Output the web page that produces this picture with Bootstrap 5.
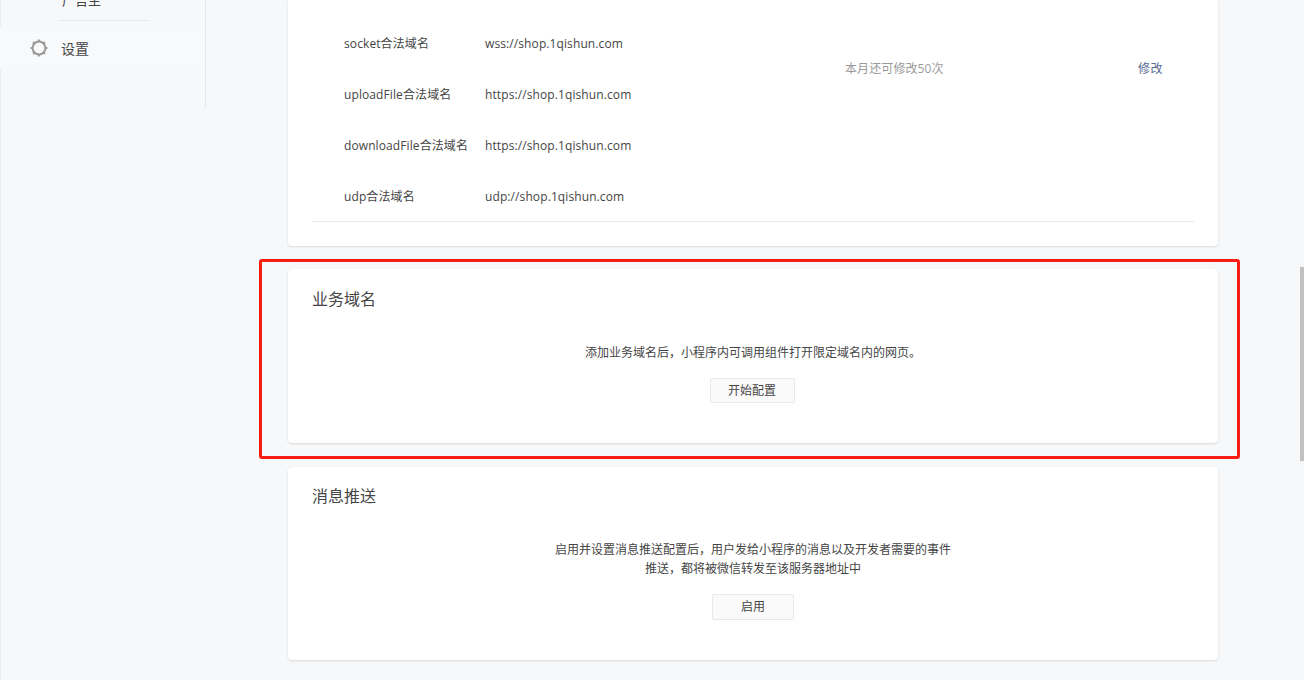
<!DOCTYPE html>
<html lang="zh">
<head>
<meta charset="utf-8">
<title>开发设置</title>
<link rel="stylesheet" href="https://cdn.jsdelivr.net/npm/bootstrap@5.3.0/dist/css/bootstrap.min.css">
<style>
html,body{height:680px;overflow:hidden}
body{background:#f6f8f9;font-family:"Open Sans","Noto Sans CJK SC",sans-serif;font-size:12px;color:#454545;position:relative}
.page-shell{height:680px;border-left:1px solid #eceef0}
.side-col{width:205px;height:108px;border-right:1px solid #e7e8ea;flex:none}
.side-cut{height:21px;position:relative;overflow:hidden;margin-left:59px;width:89px;border-bottom:1px solid #e7e8ea}
.side-cut span{display:block;margin-top:-12px;padding-left:2px;font-size:13px;line-height:24px}
.side-item{height:42px;margin:6px 0 0 -1px;padding-left:30px;gap:13px;font-size:14px;background:#f7f9fa}
.main-col{width:930px;margin-left:82px;flex:none}
.panel-box{background:#fff;border-radius:4px;box-shadow:0 1px 2px rgba(150,150,150,.3);padding:0 24px}
.panel-a{height:246px;border-radius:0 0 4px 4px;padding-top:34px}
.panel-b{height:174px;margin-top:23px;padding-top:19px}
.panel-c{height:193px;margin-top:24px;padding-top:18px}
.panel-title{font-size:16px;line-height:22px;margin:0;font-weight:400}
.dom-row{height:51px;padding-left:32px;line-height:19px;letter-spacing:.1px}
.dom-list{border-bottom:1px solid #e7e8ea;height:188px;position:relative}
.dom-name{width:141px}
.dom-val{width:360px}
.dom-note{position:absolute;left:533px;top:25px;line-height:19px;color:#9a9a9a;letter-spacing:.1px}
.dom-link{position:absolute;left:826px;top:25px;line-height:19px;color:#576b95;text-decoration:none;letter-spacing:.5px}
.panel-text{text-align:center;line-height:19px;font-size:12px}
.panel-b .panel-text{margin-top:33px;margin-bottom:16px}
.panel-c .panel-text{margin:33px auto 16px;width:400px}
.plain-btn{background:#fafafa;border:1px solid #e7e8ea;border-radius:2px;font-size:12px;line-height:22px;color:#454545;padding:0;display:block;margin:0 auto}
.btn-b{width:85px;height:25px;transform:translateX(-1px)}
.btn-c{width:82px;height:26px}
.red-frame{position:absolute;left:259px;top:259px;width:981px;height:200px;border:3px solid #fb1d14;border-radius:3px;pointer-events:none}
.scroll-thumb{position:absolute;right:0;top:267px;width:4px;height:194px;background:#c1c1c1}
</style>
</head>
<body>
<div class="page-shell d-flex">
  <nav class="side-col">
    <div class="side-cut"><span>广告主</span></div>
    <div class="side-item d-flex align-items-center">
      <svg width="18" height="18" viewBox="0 0 18 18" fill="none" stroke="#9a9a9a" aria-hidden="true">
        <circle cx="9" cy="9" r="6.4" stroke-width="2"/>
        <path d="M9 .6v2M9 15.4v2M.6 9h2M15.4 9h2M3.1 3.1l1.4 1.4M13.5 13.5l1.4 1.4M3.1 14.9l1.4-1.4M13.5 4.5l1.4-1.4" stroke-width="2.2"/>
      </svg>
      <span>设置</span>
    </div>
  </nav>
  <main class="main-col">
    <section class="panel-box panel-a">
      <div class="dom-list">
        <div class="dom-row d-flex align-items-start"><span class="dom-name">socket合法域名</span><span class="dom-val">wss://shop.1qishun.com</span></div>
        <div class="dom-row d-flex align-items-start"><span class="dom-name">uploadFile合法域名</span><span class="dom-val">https://shop.1qishun.com</span></div>
        <div class="dom-row d-flex align-items-start"><span class="dom-name">downloadFile合法域名</span><span class="dom-val">https://shop.1qishun.com</span></div>
        <div class="dom-row d-flex align-items-start"><span class="dom-name">udp合法域名</span><span class="dom-val">udp://shop.1qishun.com</span></div>
        <span class="dom-note">本月还可修改50次</span>
        <a class="dom-link" href="#">修改</a>
      </div>
    </section>
    <section class="panel-box panel-b">
      <h2 class="panel-title">业务域名</h2>
      <p class="panel-text">添加业务域名后，小程序内可调用组件打开限定域名内的网页。</p>
      <button class="plain-btn btn-b" type="button">开始配置</button>
    </section>
    <section class="panel-box panel-c">
      <h2 class="panel-title">消息推送</h2>
      <p class="panel-text">启用并设置消息推送配置后，用户发给小程序的消息以及开发者需要的事件<br>推送，都将被微信转发至该服务器地址中</p>
      <button class="plain-btn btn-c" type="button">启用</button>
    </section>
  </main>
</div>
<div class="red-frame"></div>
<div class="scroll-thumb"></div>
<script src="https://cdn.jsdelivr.net/npm/bootstrap@5.3.0/dist/js/bootstrap.bundle.min.js"></script>
</body>
</html>
